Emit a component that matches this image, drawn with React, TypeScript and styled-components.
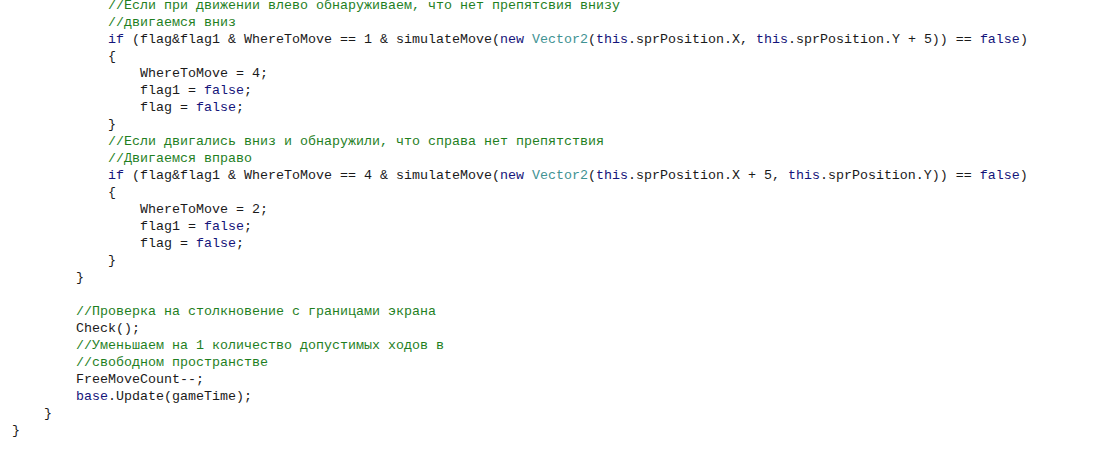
import styled, { createGlobalStyle } from "styled-components";

const GlobalStyle = createGlobalStyle`
  html, body {
    margin: 0;
    padding: 0;
    background: #ffffff;
  }
`;

type Kind = "plain" | "kw" | "type" | "comment";

const colors: Record<Kind, string> = {
  plain: "#1a1a1a",
  kw: "#14147a",
  type: "#3f9393",
  comment: "#1f7f1f",
};

const Editor = styled.div`
  width: 1113px;
  height: 449px;
  overflow: hidden;
  background: #ffffff;
  padding-left: 12px;
  box-sizing: border-box;
  font-family: "Liberation Mono", "Courier New", monospace;
  font-size: 13.33px;
  color: #1a1a1a;
`;

const Lines = styled.div`
  margin-top: -3px;
  display: flex;
  flex-direction: column;
`;

const Line = styled.div<{ $indent: number }>`
  height: 17px;
  line-height: 17px;
  white-space: pre;
  padding-left: ${(p) => p.$indent * 32}px;
`;

const Tok = styled.span<{ $kind: Kind }>`
  color: ${(p) => colors[p.$kind]};
`;

type Token = [Kind, string];
type CodeLine = { indent: number; tokens: Token[] };

const p = (s: string): Token => ["plain", s];
const k = (s: string): Token => ["kw", s];
const t = (s: string): Token => ["type", s];
const c = (s: string): Token => ["comment", s];

const code: CodeLine[] = [
  { indent: 3, tokens: [c("//Если при движении влево обнаруживаем, что нет препятсвия внизу")] },
  { indent: 3, tokens: [c("//двигаемся вниз")] },
  {
    indent: 3,
    tokens: [
      k("if"),
      p(" (flag&flag1 & WhereToMove == 1 & simulateMove("),
      k("new"),
      p(" "),
      t("Vector2"),
      p("("),
      k("this"),
      p(".sprPosition.X, "),
      k("this"),
      p(".sprPosition.Y + 5)) == "),
      k("false"),
      p(")"),
    ],
  },
  { indent: 3, tokens: [p("{")] },
  { indent: 4, tokens: [p("WhereToMove = 4;")] },
  { indent: 4, tokens: [p("flag1 = "), k("false"), p(";")] },
  { indent: 4, tokens: [p("flag = "), k("false"), p(";")] },
  { indent: 3, tokens: [p("}")] },
  { indent: 3, tokens: [c("//Если двигались вниз и обнаружили, что справа нет препятствия")] },
  { indent: 3, tokens: [c("//Двигаемся вправо")] },
  {
    indent: 3,
    tokens: [
      k("if"),
      p(" (flag&flag1 & WhereToMove == 4 & simulateMove("),
      k("new"),
      p(" "),
      t("Vector2"),
      p("("),
      k("this"),
      p(".sprPosition.X + 5, "),
      k("this"),
      p(".sprPosition.Y)) == "),
      k("false"),
      p(")"),
    ],
  },
  { indent: 3, tokens: [p("{")] },
  { indent: 4, tokens: [p("WhereToMove = 2;")] },
  { indent: 4, tokens: [p("flag1 = "), k("false"), p(";")] },
  { indent: 4, tokens: [p("flag = "), k("false"), p(";")] },
  { indent: 3, tokens: [p("}")] },
  { indent: 2, tokens: [p("}")] },
  { indent: 0, tokens: [] },
  { indent: 2, tokens: [c("//Проверка на столкновение с границами экрана")] },
  { indent: 2, tokens: [p("Check();")] },
  { indent: 2, tokens: [c("//Уменьшаем на 1 количество допустимых ходов в")] },
  { indent: 2, tokens: [c("//свободном пространстве")] },
  { indent: 2, tokens: [p("FreeMoveCount--;")] },
  { indent: 2, tokens: [k("base"), p(".Update(gameTime);")] },
  { indent: 1, tokens: [p("}")] },
  { indent: 0, tokens: [p("}")] },
];

export default function App() {
  return (
    <>
      <GlobalStyle />
      <Editor>
        <Lines>
          {code.map((line, i) => (
            <Line key={i} $indent={line.indent}>
              {line.tokens.map(([kind, text], j) => (
                <Tok key={j} $kind={kind}>
                  {text}
                </Tok>
              ))}
            </Line>
          ))}
        </Lines>
      </Editor>
    </>
  );
}
